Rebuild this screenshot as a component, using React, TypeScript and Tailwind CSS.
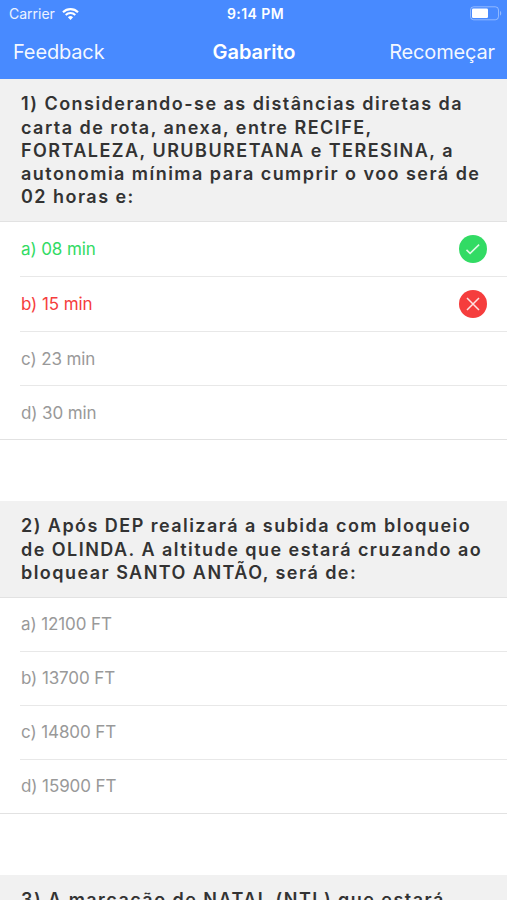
import clsx from "clsx";

type Status = "correct" | "wrong";

interface Option {
  label: string;
  status?: Status;
}

interface Question {
  lines: string[];
  options: Option[];
}

const questions: Question[] = [
  {
    lines: [
      "1) Considerando-se as distâncias diretas da",
      "carta de rota, anexa, entre RECIFE,",
      "FORTALEZA, URUBURETANA e TERESINA, a",
      "autonomia mínima para cumprir o voo será de",
      "02 horas e:",
    ],
    options: [
      { label: "a) 08 min", status: "correct" },
      { label: "b) 15 min", status: "wrong" },
      { label: "c) 23 min" },
      { label: "d) 30 min" },
    ],
  },
  {
    lines: [
      "2) Após DEP realizará a subida com bloqueio",
      "de OLINDA. A altitude que estará cruzando ao",
      "bloquear SANTO ANTÃO, será de:",
    ],
    options: [
      { label: "a) 12100 FT" },
      { label: "b) 13700 FT" },
      { label: "c) 14800 FT" },
      { label: "d) 15900 FT" },
    ],
  },
  {
    lines: ["3) A marcação de NATAL (NTL) que estará"],
    options: [],
  },
];

const WifiIcon = () => (
  <svg className="h-3 w-[17px]" viewBox="0 0 17 12" fill="none">
    <path d="M1 4.2a10.8 10.8 0 0 1 15 0" stroke="white" strokeWidth="2.2" />
    <path d="M3.7 7a7 7 0 0 1 9.6 0" stroke="white" strokeWidth="2" />
    <path d="M8.5 12 5.9 9.3a3.8 3.8 0 0 1 5.2 0z" fill="white" />
  </svg>
);

const BatteryIcon = () => (
  <svg className="h-[15px] w-8" viewBox="0 0 32 15" fill="none">
    <rect x="0.5" y="0.8" width="28" height="13" rx="3.2" stroke="white" strokeOpacity="0.4" />
    <rect x="2" y="2.6" width="16" height="9.4" rx="1.3" fill="white" />
    <path d="M30 5v4.6c1.7-.7 1.7-3.9 0-4.6z" fill="white" fillOpacity="0.4" />
  </svg>
);

const StatusIcon = ({ status }: { status: Status }) => (
  <svg className="size-7" viewBox="0 0 28 28" fill="none">
    <circle cx="14" cy="14" r="14" fill={status === "correct" ? "#32db64" : "#f53d3d"} />
    <path
      d={status === "correct" ? "m7.5 14.9 3.6 3.5 9-8.8" : "m8 8 12 12M20 8 8 20"}
      stroke="white"
      strokeOpacity="0.85"
      strokeWidth="1.5"
    />
  </svg>
);

const Header = () => (
  <header className="h-[79px] bg-[#488aff] text-white">
    <div className="grid h-[27px] grid-cols-3 items-center pl-[9px] pr-[5px]">
      <div className="flex items-center gap-[7px] text-[14px] text-white/90">
        <span>Carrier</span>
        <WifiIcon />
      </div>
      <span className="text-center text-[14px] font-semibold tracking-[0.4px]">9:14 PM</span>
      <div className="flex justify-end">
        <BatteryIcon />
      </div>
    </div>
    <nav className="grid h-[50px] grid-cols-3 items-center pl-[13px] pr-3 text-[20px]">
      <span className="tracking-[-0.15px] text-white/95">Feedback</span>
      <h1 className="text-center font-semibold">Gabarito</h1>
      <span className="text-right tracking-[-0.15px] text-white/95">Recomeçar</span>
    </nav>
  </header>
);

const QuestionBlock = ({ lines, options }: Question) => (
  <section className="mb-[61px]">
    <h2 className="border-b border-[#e2e2e2] bg-[#f1f1f1] pb-[12.7px] pl-[21px] pt-[13.3px] text-[18px] font-semibold leading-[23.2px] tracking-[1.46px] text-[#333]">
      {lines.map((line) => (
        <span key={line} className="block whitespace-nowrap">
          {line}
        </span>
      ))}
    </h2>
    <ul className="border-b border-[#e2e2e2] pl-5 text-[17px] tracking-[-0.1px]">
      {options.map(({ label, status }) => (
        <li
          key={label}
          className={clsx(
            "flex items-center justify-between border-b border-[#e8e8e8] pl-px pr-5 last:h-[53px] last:border-b-0",
            status ? "h-[55px]" : "h-[54px]",
            status === "correct" && "text-[#32db64]",
            status === "wrong" && "text-[#f53d3d]",
            !status && "text-[#999]"
          )}
        >
          <span className="pt-0.5">{label}</span>
          {status && <StatusIcon status={status} />}
        </li>
      ))}
    </ul>
  </section>
);

export default function App() {
  return (
    <div className="h-[900px] w-[507px] overflow-hidden bg-white font-['Inter',sans-serif]">
      <Header />
      <main>
        {questions.map((question) => (
          <QuestionBlock key={question.lines[0]} {...question} />
        ))}
      </main>
    </div>
  );
}
